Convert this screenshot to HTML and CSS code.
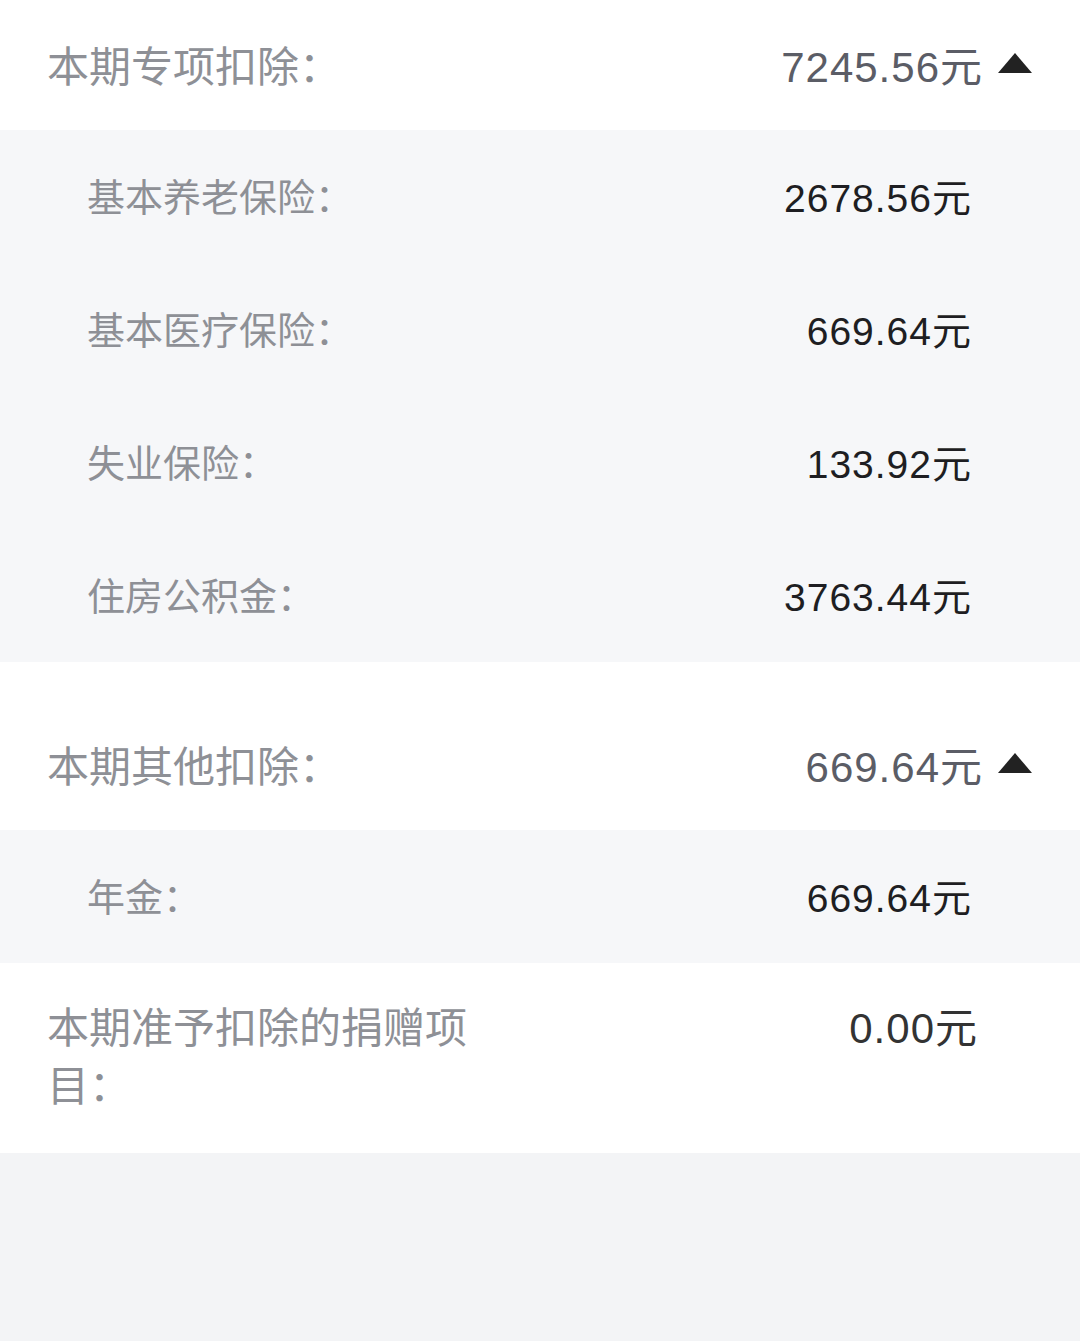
FILE: index.html
```html
<!doctype html>
<html lang="zh-CN">
<head>
  <meta charset="UTF-8" />
  <title>扣除明细</title>
  <meta name="viewport" content="width=device-width, initial-scale=1.0" />
  <link rel="stylesheet" href="styles.css">
</head>
<body>
  <div class="page">
    <!-- 专项扣除 -->
    <div class="section-head">
      <span class="head-label">本期专项扣除：</span>
      <span class="head-value">7245.56元<i class="arrow-up"></i></span>
    </div>
    <div class="sub-list">
      <div class="sub-row"><span class="sub-label">基本养老保险：</span><span class="sub-value">2678.56元</span></div>
      <div class="sub-row"><span class="sub-label">基本医疗保险：</span><span class="sub-value">669.64元</span></div>
      <div class="sub-row"><span class="sub-label">失业保险：</span><span class="sub-value">133.92元</span></div>
      <div class="sub-row"><span class="sub-label">住房公积金：</span><span class="sub-value">3763.44元</span></div>
    </div>

    <!-- 其他扣除 -->
    <div class="section-head spaced">
      <span class="head-label">本期其他扣除：</span>
      <span class="head-value">669.64元<i class="arrow-up"></i></span>
    </div>
    <div class="sub-list">
      <div class="sub-row"><span class="sub-label">年金：</span><span class="sub-value">669.64元</span></div>
    </div>

    <!-- 捐赠 -->
    <div class="donate-row">
      <span class="donate-label">本期准予扣除的捐赠项目：</span>
      <span class="donate-value">0.00元</span>
    </div>
  </div>
</body>
</html>
```

FILE: styles.css
```css
body, html {
  margin: 0;
  padding: 0;
  height: 100%;
  background: #f3f4f6;
  font-family: 'Liberation Sans', 'Noto Sans CJK SC', sans-serif;
}
.page {
  background: #fff;
}
/* Section header rows */
.section-head {
  height: 130px;
  display: flex;
  align-items: center;
  justify-content: space-between;
  padding: 0 48px 4px 47px;
  box-sizing: border-box;
  background: #fff;
}
.section-head.spaced {
  margin-top: 38px;
}
.head-label {
  font-size: 42px;
  color: #8e9096;
}
.head-value {
  display: flex;
  align-items: center;
  font-size: 42px;
  letter-spacing: 1px;
  color: #5b5d66;
}
.arrow-up {
  width: 0;
  height: 0;
  margin-left: 15px;
  border-left: 17px solid transparent;
  border-right: 17px solid transparent;
  border-bottom: 20px solid #222;
}
/* Expanded detail rows */
.sub-list {
  background: #f6f7f9;
}
.sub-row {
  height: 133px;
  display: flex;
  align-items: center;
  justify-content: space-between;
  padding: 0 108px 4px 87px;
  box-sizing: border-box;
}
.sub-label {
  font-size: 38px;
  color: #8e9096;
}
.sub-value {
  font-size: 39px;
  letter-spacing: 1px;
  color: #1e1e22;
}
/* Donation row */
.donate-row {
  display: flex;
  justify-content: space-between;
  align-items: flex-start;
  padding: 37px 102px 37px 47px;
  background: #fff;
}
.donate-label {
  max-width: 440px;
  font-size: 42px;
  line-height: 58px;
  color: #8e9096;
}
.donate-value {
  font-size: 42px;
  line-height: 58px;
  letter-spacing: 1px;
  color: #333;
}
```
